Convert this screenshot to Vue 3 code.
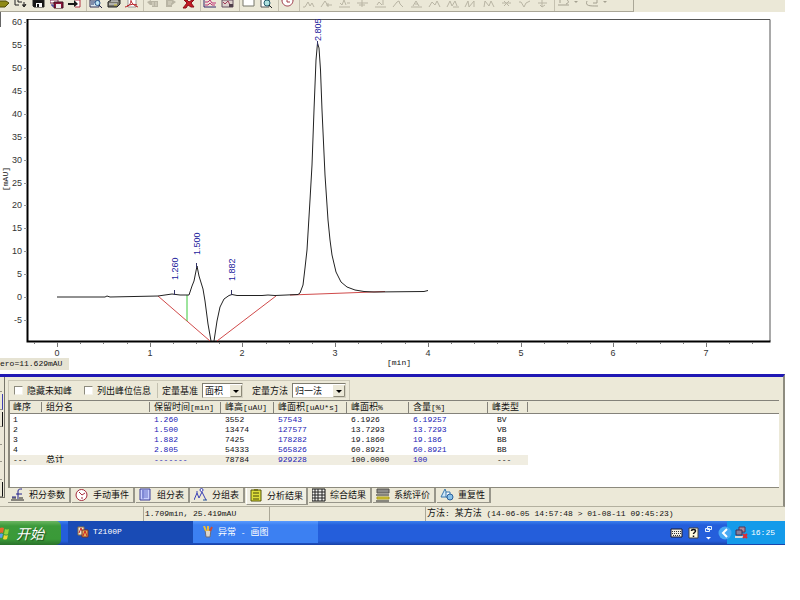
<script setup>
import { ref } from 'vue'

const K = '#222'
const G = '#b9b5a4'
// Each icon is a list of [path, fill, stroke] layers on a 14x10 grid.
const toolGroups = [
  [
    { name: '打开', art: [['M0 1 H10 L13 3 L9 7 H0 Z', '#8f8a16', '#4d4a08']] },
    { name: '批处理', art: [['M1 0 V5 H5 M4 0 V2 H8 M8 5 H12 M10 2 V7 M9 5 L10 7 L12 4', 'none', K]] },
    { name: '保存', art: [['M1 0 H12 V7 H2 L1 6 Z', '#151515', K], ['M4 3 H10 V7 H4 Z', '#fff', 'none'], ['M5 4 H7 V7 H5 Z', '#151515', 'none']] },
    { name: '另存', art: [['M0 0 H8 V3 H0 Z', '#fff', '#803050'], ['M4 2 H13 V8 H4 Z', '#8b1539', '#401020'], ['M6 4 H11 V8 H6 Z', '#eee', 'none'], ['M2 4 V6 H4', 'none', '#1a1a90']] },
    { name: '退出', art: [['M7 0 H12 V7 H7', '#fff', '#b03040'], ['M0 3 H6 V0 L10 4 L6 7 V5 H0 Z', '#181818', 'none']] },
  ],
  [
    { name: '预览', art: [['M1 0 H10 V7 H1 Z', '#dce8f0', '#335'], ['M2 2 H6 M2 4 H5', 'none', '#236'], ['M6 3 a2.5 2.5 0 1 0 5 0 a2.5 2.5 0 1 0 -5 0', '#bde3f2', '#25528a'], ['M10 5 L13 8', 'none', '#224']] },
    { name: '打印', art: [['M1 2 L4 0 H13 V4 L10 7 H1 Z', '#77766c', '#222'], ['M2 4 H10 M4 1 H11', 'none', '#eee'], ['M7 5 H10', 'none', '#d5c52a']] },
    { name: 'PDF', art: [['M3 0 V7 H11 V0', '#fff', '#999'], ['M0 7 C5 6 6 3 6 0 M6 1 C7 4 10 6 13 7 M2 6 C6 4 9 4 12 5', 'none', '#b72026']] },
  ],
  [
    { name: '上一个', art: [['M1 2 L5 0 V1 H12 V7 H6 V5 H4 Z', G, 'none'], ['M7 2 V6 M10 2 V6', 'none', '#dedac9']] },
    { name: '下一个', art: [['M2 0 V7 H8 V5 L12 2 L9 0 Z', G, 'none'], ['M4 2 H8 M4 4 H7', 'none', '#dedac9']] },
    { name: '删除', art: [['M2 0 H5 L7 2 L10 0 H12 L9 3 L12 7 H9 L6 5 L4 8 H1 L5 3 Z', '#c51a24', '#8c1018']] },
  ],
  [
    { name: '谱图', art: [['M1 0 V7 H13', 'none', '#32276a'], ['M2 2 H5 L7 0 L9 3 H13 M2 5 H5 L7 3 L9 5 H12', 'none', '#c03376']] },
    { name: '峰表', art: [['M1 0 H12 V7 H1 Z', '#dcd1cc', '#645060'], ['M2 2 L4 4 L7 1 L9 5 L11 7', 'none', '#a03b58'], ['M8 4 H12 V7 H8 Z', '#50404c', 'none']] },
  ],
  [
    { name: '窗口', art: [['M1 0 V6 H12 V0', '#fff', '#77766b']] },
    { name: '查找', art: [['M1 0 V7 H9 V0', '#fff', '#555'], ['M4 3 a3 3 0 1 0 6 0 a3 3 0 1 0 -6 0', '#aee0de', '#276070'], ['M9 5 L12 8', 'none', '#222']] },
  ],
  [
    { name: '时钟', art: [['M1 0 C1 8 12 8 12 0', '#fff', '#963040'], ['M6 0 V2 H9', 'none', '#a23b45']] },
  ],
  [
    'M1 7 H3 L6 2 L8 6 L10 3 L12 7', 'M1 7 L5 1 L8 6 M8 3 V7 M6 5 H12', 'M1 7 H12 M4 5 L6 0 L8 5 M2 3 L4 5 M9 3 H12',
    'M1 3 H12 M6 0 V7 M3 5 H9', 'M1 7 H12 M3 5 L5 2 L8 5 M9 0 V5', 'M1 7 L5 2 L7 1 L8 4 L11 7',
    'M1 7 H12 M3 6 L6 1 L9 6 M5 4 H8', 'M1 7 L4 2 L7 5 L9 1 L12 7', 'M1 7 L4 1 L6 6 L9 1 L11 6 M7 7 H13',
    'M1 7 L4 1 L5 7 L10 1 V7', 'M2 7 L3 1 L7 6 L9 1 L12 7', 'M2 3 H11 M4 1 L9 6 M9 1 L4 6',
    'M1 2 H3 L6 7 L8 3 L12 1', 'M2 3 H11 M6 0 V7 M4 5 L6 7 L9 5',
  ].map((d, i) => ({ name: '积分事件' + (i + 1), art: [[d, 'none', G]] })),
  [
    { name: '撤销', wide: true, art: [['M1 5 H12 M3 0 V3 M9 4 C12 3 12 1 10 0', 'none', '#a5a191'], ['M17 1 H21 L19 3 Z', '#a5a191', 'none']] },
    { name: '重做', wide: true, art: [['M1 1 C-1 6 3 6 12 6 M11 0 V3 H7', 'none', '#a5a191'], ['M17 1 H21 L19 3 Z', '#a5a191', 'none']] },
  ],
]

const yTicks = Array.from({ length: 14 }, (_, i) => {
  const value = 60 - i * 5
  return { value, y: Math.round(297 - value * 4.58) }
})
const xTicks = Array.from({ length: 32 }, (_, i) => {
  const value = -0.25 + i * 0.25
  return { value, major: Number.isInteger(value), x: Math.round(57 + value * 92.7) }
})
const peaks = [
  { time: '1.260', x: 178, y: 280 },
  { time: '1.500', x: 200, y: 255 },
  { time: '1.882', x: 235, y: 281 },
  { time: '2.805', x: 321, y: 41 },
]

const hideUnknown = ref(false)
const listPeaks = ref(false)
const basis = ref('面积')
const method = ref('归一法')

const columns = [
  { text: '峰序', cls: 'c-no' },
  { text: '组分名', cls: 'c-name' },
  { text: '保留时间', unit: '[min]', cls: 'c-time' },
  { text: '峰高', unit: '[uAU]', cls: 'c-height' },
  { text: '峰面积', unit: '[uAU*s]', cls: 'c-area' },
  { text: '峰面积', unit: '%', cls: 'c-pct' },
  { text: '含量', unit: '[%]', cls: 'c-content' },
  { text: '峰类型', cls: 'c-type' },
]
const rows = [
  ['1', '', '1.260', '3552', '57543', '6.1926', '6.19257', 'BV'],
  ['2', '', '1.500', '13474', '127577', '13.7293', '13.7293', 'VB'],
  ['3', '', '1.882', '7425', '178282', '19.1860', '19.186', 'BB'],
  ['4', '', '2.805', '54333', '565826', '60.8921', '60.8921', 'BB'],
  ['---', '总计', '-------', '78784', '929228', '100.0000', '100', '---'],
]

const activeTab = ref('分析结果')
const tabs = [
  { text: '积分参数', art: [['M0 12 H13 M1 10 H5 M8 10 H12', 'none', '#222'], ['M7 11 V3 C7 1 9 1 11 1 M5 6 H11 M1 9 H5', 'none', '#23238f']] },
  { text: '手动事件', art: [['M1 7 a5.5 5.5 0 1 0 11 0 a5.5 5.5 0 1 0 -11 0', '#fff', '#a52b3b'], ['M4 4 L7 7 L10 5 M6 10 H8', 'none', '#a52b3b']] },
  { text: '组分表', art: [['M1 1 H11 V12 H1 Z', '#c9d0ff', '#3d3f97'], ['M3 3 H9 M3 5 H9 M3 7 H9 M3 9 H9 M4 2 V11', 'none', '#6770c8']] },
  { text: '分组表', art: [['M0 12 L3 5 L5 10 L8 4 L12 12', 'none', '#3840b5'], ['M6 2 a1.5 1.5 0 1 0 3 0 a1.5 1.5 0 1 0 -3 0 M2 4 H4', '#fff', '#3840b5'], ['M9 12 H13', 'none', '#259']] },
  { text: '分析结果', art: [['M1 1 H11 V12 H1 Z', '#dfe03b', '#55540d'], ['M3 4 H9 M3 7 H9 M3 10 H9', 'none', '#45440a'], ['M4 0 H8 V2 H4 Z', '#77751a', 'none']] },
  { text: '综合结果', art: [['M0 1 H13 V13 H0 Z', '#f3f3f0', '#111'], ['M0 4 H13 M0 7 H13 M0 10 H13 M3 1 V13 M6 1 V13 M10 1 V13', 'none', '#222']] },
  { text: '系统评价', art: [['M1 1 H13 V5 H1 Z', '#8c8b88', '#55534e'], ['M0 7 H13', 'none', '#222'], ['M1 9 H13 V11 H1 Z', '#e1d43c', '#a59719'], ['M0 13 H13', 'none', '#222']] },
  { text: '重复性', art: [['M1 9 L5 1 L8 9 Z', '#cfe8fa', '#3977ad'], ['M6 4 H10 V9 H6 Z', '#fff', '#3977ad'], ['M7 9 a3 3 0 1 0 6 0 a3 3 0 1 0 -6 0', '#88c2ea', '#2c609b']] },
]
</script>

<template>
  <main class="screen">
    <div class="toolbar">
      <div class="tools">
        <div v-for="(group, g) in toolGroups" :key="g" class="tool-group">
          <button v-for="tool in group" :key="tool.name" class="tool" :class="{ wide: tool.wide }" :aria-label="tool.name">
            <svg :width="tool.wide ? 22 : 14" height="10" :viewBox="tool.wide ? '0 0 22 10' : '0 0 14 10'">
              <path v-for="(p, i) in tool.art" :key="i" :d="p[0]" :fill="p[1]" :stroke="p[2]" />
            </svg>
          </button>
        </div>
      </div>
    </div>

    <section class="plot">
      <svg class="chart" viewBox="0 12 785 362">
        <path d="M0.5 12 V27" stroke="#666" />
        <path d="M27 19.5 H770 V341" fill="none" stroke="#555" />
        <path d="M27.5 19 V341.5 H770.5" fill="none" stroke="#000" stroke-width="2" />
        <g class="axis">
          <template v-for="t in yTicks" :key="t.value">
            <path :d="`M24 ${t.y + 0.5} H27`" stroke="#999" />
            <text x="22" :y="t.y + 3" text-anchor="end">{{ t.value }}</text>
          </template>
          <template v-for="t in xTicks" :key="t.value">
            <path :d="`M${t.x + 0.5} 342 V${t.major ? 347 : 344}`" stroke="#777" />
            <text v-if="t.major" :x="t.x" y="356" text-anchor="middle">{{ t.value }}</text>
          </template>
        </g>
        <text class="unit" transform="translate(8 191) rotate(-90)">[mAU]</text>
        <text class="unit" x="399" y="365" text-anchor="middle">[min]</text>
        <path d="M158 296 L210 341 M217 341 L276 296 M290 295 L318 294 L345 293 L385 291.5" fill="none" stroke="#d04a4a" />
        <path d="M187 295 V321" stroke="#3cc93c" />
        <path
          class="trace"
          d="M57 297 H105 L107 296 L110 297 L158 296 L165 295 L172 294 L180 295 H189 L192 286 L194 281 L197 266 L199 276 L203 289 L205 301 L208 324 L211 341 M214 341 L217 321 L220 307 L224 299 L229 295.5 L232 294.5 L237 295.5 H262 L268 295 L275 295.5 L298 294.5 L300 293 L303 285 L305 268 L307 250 L310 200 L312 165 L314 110 L316 60 L317.5 43 L319 48 L320.5 70 L322 110 L325 175 L328 220 L330 240 L332 255 L336 272 L341 282 L347 287 L355 290 L364 291.5 L374 292 L424 291.5 L428 290.5"
        />
        <path d="M174.5 290 V295 M196.5 263 V268 M231.5 290 V295 M317.5 41 V46" stroke="#333366" />
        <text v-for="p in peaks" :key="p.time" class="peak" :transform="`translate(${p.x} ${p.y}) rotate(-90)`">{{ p.time }}</text>
      </svg>
      <output class="zero">ero=11.629mAU</output>
    </section>

    <section class="workspace">
      <div class="side-strip"><i></i><i class="blue"></i><i class="dark"></i><i></i><i></i><i></i><i class="dark"></i></div>
      <div class="panel">
        <div class="options">
          <label class="check"><input v-model="hideUnknown" type="checkbox" />隐藏未知峰</label>
          <label class="check"><input v-model="listPeaks" type="checkbox" />列出峰位信息</label>
          <div class="field field-basis">
            <label for="basis">定量基准</label>
            <span class="combo">
              <select id="basis" v-model="basis"><option>面积</option><option>峰高</option></select>
              <svg width="12" height="12" viewBox="0 0 12 12"><path d="M0 0 H12 V12 H0 Z" fill="#ece9d8" /><path d="M.5 11.5 H11.5 V.5" fill="none" stroke="#8c8978" /><path d="M3 5 H9 L6 8 Z" fill="#000" /></svg>
            </span>
          </div>
          <div class="field">
            <label for="method">定量方法</label>
            <span class="combo combo-wide">
              <select id="method" v-model="method"><option>归一法</option><option>外标法</option></select>
              <svg width="12" height="12" viewBox="0 0 12 12"><path d="M0 0 H12 V12 H0 Z" fill="#ece9d8" /><path d="M.5 11.5 H11.5 V.5" fill="none" stroke="#8c8978" /><path d="M3 5 H9 L6 8 Z" fill="#000" /></svg>
            </span>
          </div>
        </div>
        <div class="grid-area">
          <table>
            <thead>
              <tr>
                <th v-for="(c, i) in columns" :key="i" :class="c.cls"><span class="head">{{ c.text }}<span v-if="c.unit" class="latin">{{ c.unit }}</span></span></th>
                <td></td>
              </tr>
            </thead>
            <tbody>
              <tr v-for="(r, i) in rows" :key="i" :class="{ total: i === 4 }">
                <td v-for="(cell, j) in r" :key="j" :class="columns[j].cls">{{ cell }}</td>
              </tr>
            </tbody>
          </table>
        </div>
        <nav class="tabs">
          <button v-for="t in tabs" :key="t.text" :class="{ active: activeTab === t.text }" @click="activeTab = t.text">
            <svg width="14" height="14" viewBox="0 0 14 14">
              <path v-for="(p, i) in t.art" :key="i" :d="p[0]" :fill="p[1]" :stroke="p[2]" />
            </svg>{{ t.text }}
          </button>
        </nav>
      </div>
    </section>

    <footer class="status">
      <span class="s-blank"></span>
      <span class="s-pos">1.709min, 25.419mAU</span>
      <span class="s-mid"></span>
      <span class="s-method"><span class="cjk">方法</span>: <span class="cjk">某方法</span> (14-06-05 14:57:48 &gt; 01-08-11 09:45:23)</span>
    </footer>

    <div class="taskbar">
      <button class="start">
        <svg width="10" height="13" viewBox="0 0 10 13"><path d="M0 1 Q2 0 4 1 L3 6 Q1 5 0 6 Z" fill="#e8672e" /><path d="M5 2 Q7 3 9 2 L8 7 Q6 8 4 7 Z" fill="#9ad53a" /><path d="M0 7 Q1 6 3 7 L2 11 Q1 10 0 11 Z" fill="#5a9cf0" /><path d="M4 8 Q6 9 8 8 L7 12 Q5 13 3 12 Z" fill="#f3d434" /></svg>
        <span>开始</span>
      </button>
      <button class="task current">
        <svg width="12" height="12" viewBox="0 0 12 12"><path d="M1 1 H7 V9 H1 Z" fill="#f0ead0" stroke="#8c6d42" /><path d="M2 7 L4 2 L6 7" fill="none" stroke="#c22" /><path d="M5 4 H11 V11 H5 Z" fill="#e5b15a" stroke="#7d2f25" /><path d="M6 10 L8 5 L10 10" fill="none" stroke="#d02222" /></svg>
        <span class="latin">T2100P</span>
      </button>
      <button class="task">
        <svg width="12" height="12" viewBox="0 0 12 12"><path d="M3 4 H9 L8 11 H4 Z" fill="#dcd6cd" stroke="#6b6b7a" /><path d="M4 5 L2 0 M6 5 V0" stroke="#e9bc3a" stroke-width="2" /><path d="M8 5 L10 1" stroke="#d24a2c" stroke-width="2" /></svg>
        <span>异常<span class="latin"> - </span>画图</span>
      </button>
      <div class="langbar">
        <svg width="13" height="12" viewBox="0 0 13 12"><path d="M1 2 H12 V10 H1 Z" fill="#f0eee4" stroke="#1a1a2c" /><path d="M2 4.5 H11 M2 6.5 H11 M3 8.5 H10" stroke="#333" stroke-dasharray="1 1" /></svg>
        <svg width="11" height="12" viewBox="0 0 11 12"><path d="M1 1 H10 V11 H1 Z" fill="#fffbe0" stroke="#444" /><path d="M3.5 4 C3.5 2 7.5 2 7.5 4 C7.5 5.5 5.5 5.5 5.5 7 M5.5 8.5 V10" fill="none" stroke="#111" stroke-width="1.5" /></svg>
        <svg class="restore" width="9" height="16" viewBox="0 0 9 16"><path d="M3.5 1.5 H7.5 V4.5 H3.5 Z M1.5 3.5 H5.5 V6.5 H1.5 Z" fill="#2868df" stroke="#e8f2ff" /><path d="M2 12 H7 L4.5 14.5 Z" fill="#fff" /></svg>
      </div>
      <div class="tray">
        <button class="chevron" aria-label="显示隐藏的图标"><svg width="14" height="14" viewBox="0 0 14 14"><circle cx="7" cy="7" r="6.5" fill="#48a9f4" /><path d="M9 3 L5 7 L9 11" fill="none" stroke="#fff" stroke-width="2" /></svg></button>
        <svg width="15" height="14" viewBox="0 0 15 14"><path d="M5 1 H11 V6 H5 Z" fill="#b08a98" stroke="#5a3450" /><path d="M2 4 H8 V9 H2 Z" fill="#8a7f98" stroke="#3c3058" /><path d="M1 11 H9" stroke="#d6d6d6" stroke-width="2" /><path d="M9 8 L13 12 M13 8 L9 12" stroke="#e02a32" stroke-width="2" /></svg>
        <time class="latin">16:25</time>
      </div>
    </div>
  </main>
</template>

<style>
body {
  margin: 0;
  background: #fff;
}
</style>

<style scoped>
.screen {
  padding-right: 15px;
  overflow: hidden;
  color: #111;
  font: 9px/10px "Noto Sans CJK SC", sans-serif;
}
button, select {
  margin: 0;
  padding: 0;
  border: 0;
  background: none;
  color: inherit;
  font: inherit;
}
svg {
  display: block;
  flex: none;
}
.latin {
  font-family: "Liberation Mono", monospace;
  font-size: 8px;
}
.toolbar {
  display: flex;
  height: 12px;
  background: #ebe8d7;
}
.tools {
  display: flex;
  width: 634px;
  box-sizing: border-box;
  border-right: 1px solid #aaa797;
  border-bottom: 1px solid #aaa797;
  overflow: hidden;
}
.tool-group {
  display: flex;
  flex: none;
  padding-right: 2px;
  border-right: 1px solid #c5c1b0;
}
.tool-group:first-child {
  margin-left: -6px;
}
.tool-group:last-child {
  border: 0;
}
.tool {
  display: flex;
  width: 18px;
  padding-left: 2px;
}
.tool.wide {
  width: 29px;
}
.plot {
  display: grid;
  overflow: hidden;
}
.chart, .zero {
  grid-area: 1 / 1;
}
.chart {
  width: 100%;
  height: auto;
}
.axis text, .peak {
  font: 9px "Liberation Sans", sans-serif;
  fill: #333;
}
.peak {
  fill: #1a1a9c;
}
.unit {
  font: 8px "Liberation Mono", monospace;
  fill: #111;
}
.trace {
  fill: none;
  stroke: #222;
}
.zero {
  align-self: end;
  justify-self: start;
  width: 69px;
  margin-bottom: 4px;
  background: #e6e3d3;
  font: 8px/12px "Liberation Mono", monospace;
}
.workspace {
  display: flex;
  gap: 3px;
  box-sizing: border-box;
  border-top: 3px solid #2018b4;
  border-right: 2px solid #8e8c80;
  border-bottom: 1px solid #b3b09f;
  background: #ece9d8;
}
.side-strip {
  display: flex;
  flex-direction: column;
  gap: 2px;
  width: 5px;
  height: 121px;
  box-sizing: border-box;
  border-right: 1px solid #77756a;
  border-bottom: 1px solid #77756a;
}
.side-strip i {
  flex: 1;
  width: 2px;
  border-bottom: 1px solid #99978a;
}
.side-strip .blue {
  border-right: 1px solid #4040b0;
}
.side-strip .dark {
  border-right: 1px solid #111;
}
.panel {
  flex: 1;
  min-width: 0;
  padding-top: 3px;
}
.options {
  display: flex;
  align-items: center;
  width: 342px;
  height: 20px;
  box-sizing: border-box;
  padding-left: 5px;
  border: 1px solid #cbc8b7;
  border-bottom: 0;
  white-space: nowrap;
}
.check {
  display: flex;
  align-items: center;
  gap: 4px;
  width: 70px;
}
.check + .check {
  width: 73px;
}
.check input {
  appearance: none;
  width: 9px;
  height: 9px;
  margin: 0;
  border: 1px solid #8d8b7e;
  border-right-color: #f5f3ea;
  border-bottom-color: #f5f3ea;
  background: #fff;
}
.check input:checked {
  background: #335;
}
.field {
  display: flex;
  align-items: center;
  gap: 4px;
}
.field-basis {
  margin-right: 9px;
  padding-left: 4px;
  border-left: 1px solid #c4c1b0;
}
.combo {
  display: flex;
  align-items: center;
  width: 41px;
  height: 15px;
  box-sizing: border-box;
  border: 1px solid #7f7d70;
  border-right-color: #d5d2c2;
  border-bottom-color: #d5d2c2;
  background: #fff;
}
.combo-wide {
  width: 54px;
}
.combo select {
  appearance: none;
  flex: 1;
  min-width: 0;
  padding-left: 2px;
}
.grid-area {
  height: 87px;
  margin-right: 4px;
  border-left: 2px solid #8c8a7d;
  border-bottom: 1px solid #8c8a7d;
  background: #fff;
}
table {
  width: 100%;
  table-layout: fixed;
  border-collapse: separate;
  border-spacing: 0;
}
th {
  font-weight: normal;
}
th, td {
  overflow: hidden;
  padding: 0 0 0 4px;
  text-align: left;
  white-space: nowrap;
}
thead th, thead td {
  height: 12px;
  padding: 0;
  border-top: 1px solid #84827a;
  border-bottom: 1px solid #84827a;
  background: #ece9d8;
}
.head {
  display: block;
  padding-left: 4px;
  border-right: 1px solid #84827a;
}
tbody td {
  box-sizing: border-box;
  height: 10px;
  font: 8px/10px "Liberation Mono", "Noto Sans CJK SC", monospace;
}
tbody tr:first-child td {
  padding-top: 1px;
}
.c-no { width: 32px; }
.c-name { width: 108px; }
.c-time { width: 71px; }
.c-height { width: 53px; }
.c-area { width: 73px; }
.c-pct { width: 62px; }
.c-content { width: 79px; }
.c-type { width: 40px; }
tbody .c-no, .c-no .head {
  padding-left: 3px;
}
tbody .c-name {
  font-size: 9px;
}
tbody .c-time, tbody .c-area, tbody .c-content {
  color: #2222b4;
}
tbody .c-type {
  padding-left: 9px;
}
.total td {
  background: #f0ede1;
}
.tabs {
  display: flex;
  align-items: flex-start;
  gap: 1px;
  height: 18px;
}
.tabs button {
  display: flex;
  align-items: center;
  gap: 4px;
  height: 15px;
  padding: 0 4px 0 3px;
  border-right: 2px solid #98968a;
  border-bottom: 1px solid #98968a;
  white-space: nowrap;
}
.tabs .active {
  height: 17px;
  gap: 3px;
  padding: 0 3px;
  border-left: 1px solid #fff;
  background: #f1efe3;
}
.status {
  display: flex;
  height: 14px;
  align-items: center;
  background: #ece9d8;
  font: 8px/14px "Liberation Mono", monospace;
  white-space: nowrap;
}
.status > span {
  height: 14px;
  box-sizing: border-box;
  border-left: 1px solid #aaa797;
  padding-left: 1px;
}
.status .s-blank {
  width: 143px;
  border: 0;
}
.s-pos { width: 126px; }
.s-mid { width: 156px; }
.s-method { flex: 1; }
.cjk {
  font: 9px/12px "Noto Sans CJK SC", sans-serif;
}
.taskbar {
  display: flex;
  height: 24px;
  background: linear-gradient(#3b80ee, #245edb 4px, #245edb 20px, #1941a5);
  color: #fff;
}
.start {
  display: flex;
  align-items: center;
  gap: 6px;
  width: 61px;
  margin-right: 7px;
  border-radius: 0 5px 5px 0;
  background: linear-gradient(#6cb562, #3c9a3a 5px, #3a9a38 18px, #2a722b);
  font-size: 14px;
  font-style: italic;
  line-height: 20px;
  text-shadow: 1px 1px 1px #1d4f1e;
}
.task {
  display: flex;
  align-items: center;
  gap: 4px;
  width: 125px;
  height: 22px;
  padding-left: 9px;
  background: linear-gradient(#5a9bff, #3c80f2 4px);
  white-space: pre;
}
.task.current {
  background: #194bb5;
}
.langbar {
  display: flex;
  align-items: center;
  gap: 5px;
  margin-left: auto;
  padding-right: 5px;
}
.tray {
  display: flex;
  align-items: center;
  gap: 2px;
  width: 67px;
  height: 23px;
  background: linear-gradient(90deg, transparent 9px, #149bea 9px);
}
</style>
